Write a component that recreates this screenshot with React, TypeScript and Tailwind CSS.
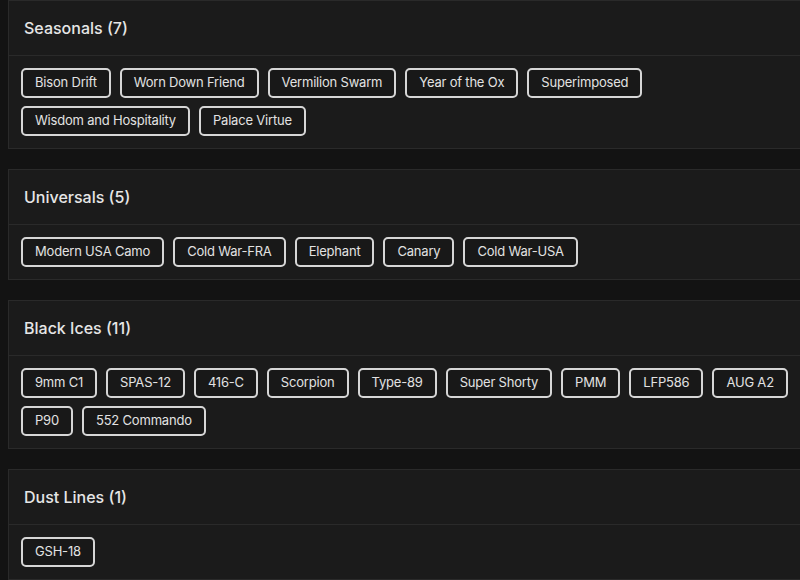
import React from "react";

const groups = [
  {
    title: "Seasonals",
    items: ["Bison Drift", "Worn Down Friend", "Vermilion Swarm", "Year of the Ox", "Superimposed", "Wisdom and Hospitality", "Palace Virtue"],
  },
  {
    title: "Universals",
    items: ["Modern USA Camo", "Cold War-FRA", "Elephant", "Canary", "Cold War-USA"],
  },
  {
    title: "Black Ices",
    items: ["9mm C1", "SPAS-12", "416-C", "Scorpion", "Type-89", "Super Shorty", "PMM", "LFP586", "AUG A2", "P90", "552 Commando"],
  },
  {
    title: "Dust Lines",
    items: ["GSH-18"],
  },
];

const Section = ({ title, items }: { title: string; items: string[] }) => (
  <div className="w-[820px] border border-[#2a2a2a] bg-[#1b1b1b]">
    <div className="flex h-[55px] items-center border-b border-[#2a2a2a] px-[15px]">
      <h2 className="text-[16px] font-medium text-[#e6e6e6]">
        {title} ({items.length})
      </h2>
    </div>
    <div className="flex flex-wrap gap-x-[9px] gap-y-[8px] p-[12px]">
      {items.map((item) => (
        <span
          key={item}
          className="flex h-[30px] items-center rounded-[5px] border-2 border-[#d6d6d6] bg-[#181818] px-[12px] text-[13px] tracking-[-0.2px] text-[#e2e2e2]"
        >
          {item}
        </span>
      ))}
    </div>
  </div>
);

export default function App() {
  return (
    <div
      className="h-[580px] w-[800px] overflow-hidden bg-[#131313] pl-2"
      style={{ fontFamily: "Inter, 'Open Sans', sans-serif" }}
    >
      <div className="flex flex-col gap-[20px]">
        {groups.map((g) => (
          <Section key={g.title} title={g.title} items={g.items} />
        ))}
      </div>
    </div>
  );
}
